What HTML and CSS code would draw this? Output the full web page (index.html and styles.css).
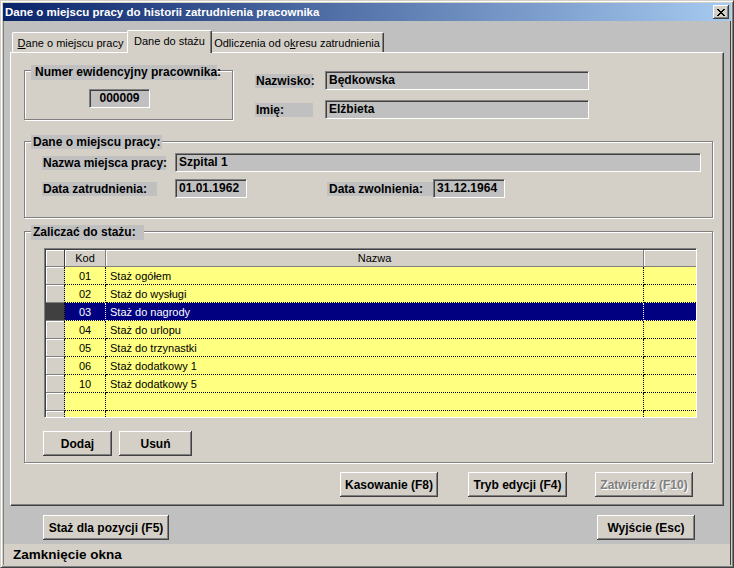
FILE: index.html
```html
<!DOCTYPE html>
<html lang="pl">
<head>
<meta charset="utf-8">
<title>Dane o miejscu pracy do historii zatrudnienia pracownika</title>
<link rel="stylesheet" href="styles.css">
</head>
<body>
<div class="window">
  <div class="titlebar">
    <span class="title">Dane o miejscu pracy do historii zatrudnienia pracownika</span>
    <button class="close" type="button" aria-label="Zamknij">
      <svg width="8" height="7" viewBox="0 0 8 7"><path fill="#000" d="M0 0h2v1H0zM6 0h2v1H6zM1 1h2v1H1zM5 1h2v1H5zM2 2h4v1H2zM3 3h2v1H3zM2 4h4v1H2zM1 5h2v1H1zM5 5h2v1H5zM0 6h2v1H0zM6 6h2v1H6z"/></svg>
    </button>
  </div>
  <div class="client">
    <div class="tabs">
      <div class="tab tab1"><u>D</u>ane o miejscu pracy</div>
      <div class="tab active">Dane do stażu</div>
      <div class="tab tab3">Odliczenia od o<u>k</u>resu zatrudnienia</div>
    </div>
    <div class="page">
      <div class="top-row">
        <div class="group g-numer">
          <div class="legend lg-numer">Numer ewidencyjny pracownika:</div>
          <div class="field f-numer">000009</div>
        </div>
        <div class="person">
          <div class="row">
            <span class="label l-person">Nazwisko:</span>
            <span class="field f-person">Będkowska</span>
          </div>
          <div class="row row-imie">
            <span class="label l-person">Imię:</span>
            <span class="field f-person f-imie">Elżbieta</span>
          </div>
        </div>
      </div>

      <div class="group g-miejsce">
        <div class="legend lg-miejsce">Dane o miejscu pracy:</div>
        <div class="row row-nazwa">
          <span class="label l-nazwa">Nazwa miejsca pracy:</span>
          <span class="field f-nazwa">Szpital 1</span>
        </div>
        <div class="row row-daty">
          <span class="label l-zatr">Data zatrudnienia:</span>
          <span class="field f-data f-zatr">01.01.1962</span>
          <span class="label l-zwol">Data zwolnienia:</span>
          <span class="field f-data">31.12.1964</span>
        </div>
      </div>

      <div class="group g-staz">
        <div class="legend lg-staz">Zaliczać do stażu:</div>
        <div class="grid-wrap">
          <div class="grid">
            <div class="h h-ind"></div><div class="h">Kod</div><div class="h">Nazwa</div><div class="h h-ext"></div>

            <div class="c ind"></div><div class="c kod">01</div><div class="c naz">Staż ogółem</div><div class="c ext"></div>
            <div class="c ind"></div><div class="c kod">02</div><div class="c naz">Staż do wysługi</div><div class="c ext"></div>
            <div class="c ind sel"></div><div class="c kod sel">03</div><div class="c naz sel">Staż do nagrody</div><div class="c ext sel"></div>
            <div class="c ind"></div><div class="c kod">04</div><div class="c naz">Staż do urlopu</div><div class="c ext"></div>
            <div class="c ind"></div><div class="c kod">05</div><div class="c naz">Staż do trzynastki</div><div class="c ext"></div>
            <div class="c ind"></div><div class="c kod">06</div><div class="c naz">Staż dodatkowy 1</div><div class="c ext"></div>
            <div class="c ind"></div><div class="c kod">10</div><div class="c naz">Staż dodatkowy 5</div><div class="c ext"></div>
            <div class="c ind"></div><div class="c kod"></div><div class="c naz"></div><div class="c ext"></div>
            <div class="c ind"></div><div class="c kod"></div><div class="c naz"></div><div class="c ext"></div>
          </div>
        </div>
        <div class="btn-row">
          <button class="btn b-dodaj" type="button">Dodaj</button>
          <button class="btn b-usun" type="button">Usuń</button>
        </div>
      </div>

      <div class="actions">
        <button class="btn b-kas" type="button">Kasowanie (F8)</button>
        <button class="btn b-tryb" type="button">Tryb edycji (F4)</button>
        <button class="btn b-zat" type="button" disabled>Zatwierdź (F10)</button>
      </div>
    </div>

    <div class="bottom">
      <button class="btn b-staz" type="button">Staż dla pozycji (F5)</button>
      <button class="btn b-wyj" type="button">Wyjście (Esc)</button>
    </div>
    <div class="status">Zamknięcie okna</div>
  </div>
</div>
</body>
</html>
```

FILE: styles.css
```css
* { box-sizing: border-box; }
html, body { margin: 0; padding: 0; }
body {
  background: #d4d0c8;
  font-family: "Liberation Sans", Arial, sans-serif;
  font-size: 12px;
  color: #000;
}
button { font-family: inherit; color: inherit; }

.window {
  width: 734px;
  height: 568px;
  border: 1px solid;
  border-color: #d4d0c8 #404040 #404040 #d4d0c8;
  box-shadow: inset 1px 1px 0 #fff, inset -1px -1px 0 #808080;
  padding: 2px;
  background: #d4d0c8;
  display: flex;
  flex-direction: column;
  overflow: hidden;
}

.titlebar {
  flex: none;
  height: 18px;
  display: flex;
  align-items: center;
  justify-content: space-between;
  padding: 0 2px 0 2px;
  background: linear-gradient(to right, #0a246a, #a6caf0);
}
.title {
  color: #fff;
  font-weight: bold;
  font-size: 11.5px;
  white-space: nowrap;
}
.close {
  width: 16px;
  height: 14px;
  padding: 0;
  border: 0;
  background: #d4d0c8;
  display: flex;
  align-items: center;
  justify-content: center;
  box-shadow: inset -1px -1px 0 #404040, inset 1px 1px 0 #fff, inset -2px -2px 0 #808080;
}
.close svg { display: block; }

.client {
  flex: 1;
  background: #c0c0c0;
  border-left: 1px solid #808080;
  border-right: 1px solid #404040;
  display: flex;
  flex-direction: column;
}

/* tabs */
.tabs {
  flex: none;
  height: 31px;
  display: flex;
  align-items: flex-end;
  padding-left: 8px;
}
.tab {
  height: 20px;
  background: #d4d0c8;
  border-top: 1px solid #fff;
  border-left: 1px solid #fff;
  border-right: 1px solid #404040;
  box-shadow: inset -1px 0 0 #808080;
  border-radius: 2px 2px 0 0;
  font-size: 11px;
  display: flex;
  align-items: center;
  justify-content: center;
  white-space: nowrap;
}
.tab1 { width: 117px; }
.tab3 { width: 174px; }
.active {
  width: 85px;
  height: 23px;
  margin: 0 -2px -1px;
  padding-bottom: 2px;
  position: relative;
  z-index: 1;
}

/* tab page */
.page {
  flex: none;
  width: 714px;
  height: 454px;
  margin-left: 6px;
  background: #d4d0c8;
  border-top: 1px solid #fff;
  border-left: 1px solid #fff;
  border-right: 1px solid #404040;
  border-bottom: 1px solid #404040;
  box-shadow: inset -1px -1px 0 #808080;
  padding-left: 13px;
  display: flex;
  flex-direction: column;
}

.group {
  border: 1px solid #808080;
  box-shadow: inset 1px 1px 0 #fff, 1px 1px 0 #fff;
  flex: none;
}
.legend {
  background: #c0c0c0;
  font-weight: bold;
  height: 15px;
  line-height: 15px;
  white-space: nowrap;
  margin-left: 6px;
}
.label {
  display: inline-block;
  background: #c0c0c0;
  font-weight: bold;
  height: 14px;
  line-height: 14px;
  padding-left: 1px;
  white-space: nowrap;
  flex: none;
}
.field {
  display: block;
  height: 19px;
  line-height: 17px;
  background: #c0c0c0;
  border: 1px solid;
  border-color: #808080 #fff #fff #808080;
  box-shadow: inset 1px 1px 0 #404040;
  font-weight: bold;
  padding-left: 3px;
  white-space: nowrap;
  flex: none;
}
.row { display: flex; align-items: center; }

.top-row {
  display: flex;
  align-items: flex-start;
  margin-top: 17px;
}
.g-numer { width: 209px; height: 50px; }
.lg-numer { width: 186px; margin-top: -6px; padding-left: 4px; }
.f-numer {
  width: 61px;
  margin: 9px 0 0 64px;
  text-align: center;
  padding-left: 0;
}
.person { margin: 1px 0 0 22px; }
.row-imie { margin-top: 10px; }
.l-person { width: 58px; }
.f-person { width: 264px; margin-left: 12px; }

.g-miejsce { width: 689px; height: 77px; margin-top: 21px; }
.lg-miejsce { width: 131px; height: 14px; line-height: 14px; margin-top: -7px; padding-left: 2px; }
.row-nazwa { margin: 4px 0 0 17px; }
.row-daty { margin: 7px 0 0 17px; }
.l-nazwa { width: 124px; }
.f-nazwa { width: 526px; margin-left: 9px; }
.l-zatr { width: 115px; }
.f-data { width: 72px; }
.f-zatr { margin-left: 18px; }
.l-zwol { width: 106px; margin-left: 80px; padding-left: 2px; }

.g-staz { width: 689px; height: 232px; margin-top: 13px; }
.lg-staz { width: 113px; margin-top: -7px; padding-left: 2px; }

.grid-wrap {
  width: 653px;
  height: 170px;
  margin: 8px 0 0 19px;
  border: 1px solid;
  border-color: #808080 #fff #fff #808080;
  box-shadow: inset 1px 1px 0 #404040;
  background: #ffff80;
  padding: 1px 0 0 1px;
  overflow: hidden;
}
.grid {
  display: grid;
  grid-template-columns: 19px 41px 538px 52px;
  grid-template-rows: 17px;
  grid-auto-rows: 18px;
  font-size: 11px;
}
.h {
  background: #d4d0c8;
  border-right: 1px solid #808080;
  border-bottom: 1px solid #808080;
  box-shadow: inset 1px 1px 0 #fff;
  text-align: center;
  line-height: 16px;
}
.h-ind { border-right-color: #404040; }
.h-ext { border-right: 0; }
.c {
  border-bottom: 1px dotted #000;
  border-right: 1px dotted #000;
  line-height: 16px;
  padding-top: 1px;
  white-space: nowrap;
}
.ext { border-right: 0; }
.ind {
  background: #d4d0c8;
  box-shadow: inset 1px 1px 0 #fff;
  border-bottom: 1px solid #808080;
}
.kod { text-align: center; }
.naz { padding-left: 4px; }
.c.sel {
  background: #000080;
  color: #fff;
  border-bottom-color: #ffff80;
  border-right-color: #fff;
}
.c.ind.sel {
  background: #404040;
  box-shadow: none;
  border-right-color: #000;
  border-bottom-color: #808080;
}

.btn {
  height: 25px;
  padding: 0;
  border: 0;
  background: #d4d0c8;
  box-shadow: inset -1px -1px 0 #404040, inset 1px 1px 0 #fff, inset -2px -2px 0 #808080;
  font-size: 12px;
  font-weight: bold;
  white-space: nowrap;
  flex: none;
}
.btn:disabled {
  color: #808080;
  text-shadow: 1px 1px 0 #fff;
}
.btn-row {
  display: flex;
  gap: 7px;
  margin: 13px 0 0 18px;
}
.b-dodaj { width: 69px; }
.b-usun { width: 73px; }

.actions {
  display: flex;
  justify-content: flex-end;
  margin: 9px 30px 0 0;
}
.b-kas { width: 98px; }
.b-tryb { width: 99px; margin-left: 30px; }
.b-zat { width: 98px; margin-left: 28px; }

.bottom {
  flex: none;
  display: flex;
  justify-content: space-between;
  margin-top: 9px;
  padding: 0 35px 0 39px;
}
.b-staz { width: 126px; }
.b-wyj { width: 98px; }

.status {
  margin-top: auto;
  height: 21px;
  line-height: 21px;
  background: #d4d0c8;
  padding-left: 9px;
  font-size: 13.5px;
  font-weight: bold;
  white-space: nowrap;
}
```
